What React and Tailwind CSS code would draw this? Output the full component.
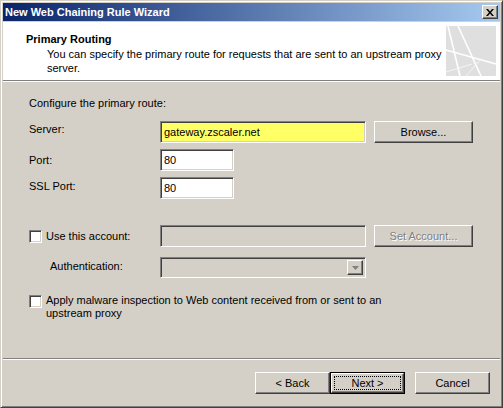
import React from "react";

const sunken =
  "border border-t-[#808080] border-l-[#808080] border-r-white border-b-white shadow-[inset_1px_1px_0_#404040,inset_-1px_-1px_0_#d4d0c8]";
const raised =
  "border border-t-white border-l-white border-r-[#404040] border-b-[#404040] shadow-[inset_-1px_-1px_0_#808080]";

function Checkbox() {
  return <div className={`w-[13px] h-[13px] bg-white shrink-0 ${sunken}`} />;
}

function Button({ children, disabled, isDefault }) {
  if (isDefault) {
    return (
      <div className="w-[75px] h-[22px] border border-black bg-[#d4d0c8]">
        <div className={`w-full h-full ${raised} flex items-center justify-center p-[2px]`}>
          <div className="w-full h-full border border-dotted border-black flex items-center justify-center">
            {children}
          </div>
        </div>
      </div>
    );
  }
  return (
    <div
      className={`h-[22px] ${raised} bg-[#d4d0c8] flex items-center justify-center ${
        disabled ? "text-[#808080] [text-shadow:1px_1px_0_#ffffff]" : "text-black"
      }`}
    >
      {children}
    </div>
  );
}

function HeaderArt() {
  return (
    <svg width="50" height="50" viewBox="0 0 50 50" className="block">
      <rect width="50" height="50" fill="#dfdfdf" />
      <g stroke="#ffffff" strokeWidth="1.6" fill="none">
        <line x1="2" y1="0" x2="14" y2="50" />
        <line x1="12" y1="0" x2="35" y2="50" />
        <line x1="0" y1="24" x2="50" y2="38" />
      </g>
      <g stroke="#f4f4f4" strokeWidth="1" fill="none">
        <line x1="0" y1="46" x2="26" y2="38" />
        <line x1="20" y1="50" x2="36" y2="32" />
      </g>
    </svg>
  );
}

export default function App() {
  return (
    <div className="w-[503px] h-[408px] bg-[#d4d0c8] border border-t-[#d4d0c8] border-l-[#d4d0c8] border-r-[#404040] border-b-[#404040] shadow-[inset_1px_1px_0_#ffffff,inset_-1px_-1px_0_#808080] p-[2px] flex flex-col font-['Liberation_Sans',Arial,sans-serif] text-[11px] leading-[13px] text-black select-none">
      {/* Title bar */}
      <div className="h-[18px] shrink-0 bg-[linear-gradient(to_right,#0a246a,#a6caf0)] flex items-center justify-between pl-[2px] pr-[2px]">
        <span className="text-white font-bold text-[11px]">New Web Chaining Rule Wizard</span>
        <div className={`w-[16px] h-[14px] ${raised} bg-[#d4d0c8] flex items-center justify-center`}>
          <svg width="8" height="7" viewBox="0 0 8 7">
            <path d="M0 0h2l2 2.5L6 0h2L5 3.5 8 7H6L4 4.5 2 7H0l3-3.5z" fill="#000" />
          </svg>
        </div>
      </div>

      {/* Header */}
      <div className="mt-[1px] h-[58px] shrink-0 bg-white flex justify-between pr-[5px]">
        <div className="pl-[23px] pt-[11px]">
          <div className="font-bold">Primary Routing</div>
          <div className="pl-[21px] pt-[1px] leading-[14px] w-[420px]">
            You can specify the primary route for requests that are sent to an upstream proxy server.
          </div>
        </div>
        <div className="pt-[4px]">
          <HeaderArt />
        </div>
      </div>
      <div className="h-[1px] bg-[#808080] shrink-0" />
      <div className="h-[1px] bg-white shrink-0" />

      {/* Body */}
      <div className="flex-1 pl-[26px] pt-[15px]">
        <div>Configure the primary route:</div>

        <div className="flex items-start mt-[11px]">
          <div className="w-[131px] pt-[2px]">Server:</div>
          <div className={`w-[206px] h-[22px] bg-[#ffff66] ${sunken} flex items-center px-[3px]`}>
            gateway.zscaler.net
          </div>
          <div className="ml-[8px] w-[99px]">
            <Button>Browse...</Button>
          </div>
        </div>

        <div className="flex items-center mt-[6px]">
          <div className="w-[131px]">Port:</div>
          <div className={`w-[74px] h-[22px] bg-white ${sunken} flex items-center px-[3px]`}>80</div>
        </div>

        <div className="flex items-center mt-[6px]">
          <div className="w-[131px] -mt-[3px]">SSL Port:</div>
          <div className={`w-[74px] h-[22px] bg-white ${sunken} flex items-center px-[3px]`}>80</div>
        </div>

        <div className="flex items-center mt-[26px]">
          <div className="w-[131px] flex items-center">
            <Checkbox />
            <span className="ml-[4px]">Use this account:</span>
          </div>
          <div className={`w-[206px] h-[22px] bg-[#d4d0c8] ${sunken}`} />
          <div className="ml-[8px] w-[99px]">
            <Button disabled>Set Account...</Button>
          </div>
        </div>

        <div className="flex items-center mt-[10px]">
          <div className="w-[131px] pl-[21px] -mt-[3px]">Authentication:</div>
          <div className={`w-[206px] h-[21px] bg-[#d4d0c8] ${sunken} flex justify-end items-center pr-[2px]`}>
            <div className={`w-[16px] h-[15px] ${raised} bg-[#d4d0c8] flex items-center justify-center`}>
              <svg width="7" height="4" viewBox="0 0 7 4">
                <path d="M0 0h7L3.5 4z" fill="#808080" />
              </svg>
            </div>
          </div>
        </div>

        <div className="flex items-start mt-[16px]">
          <div className="pt-[1px]">
            <Checkbox />
          </div>
          <div className="ml-[4px] w-[348px]">
            Apply malware inspection to Web content received from or sent to an upstream proxy
          </div>
        </div>
      </div>

      {/* Footer */}
      <div className="h-[1px] bg-[#808080] shrink-0" />
      <div className="h-[1px] bg-white shrink-0" />
      <div className="h-[45px] shrink-0 flex justify-end items-start pt-[12px] pr-[10px]">
        <div className="w-[75px]">
          <Button>&lt; Back</Button>
        </div>
        <Button isDefault>Next &gt;</Button>
        <div className="w-[75px] ml-[10px]">
          <Button>Cancel</Button>
        </div>
      </div>
    </div>
  );
}
